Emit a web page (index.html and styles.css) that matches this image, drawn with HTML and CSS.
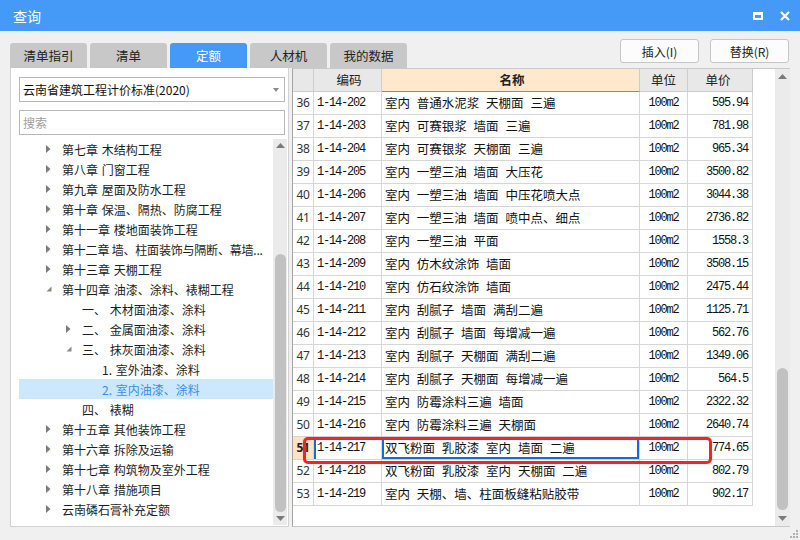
FILE: index.html
```html
<!DOCTYPE html>
<html lang="zh-CN">
<head>
<meta charset="utf-8">
<title>查询</title>
<link rel="stylesheet" href="styles.css">
</head>
<body>
<div class="window">
  <div class="titlebar">
    <span class="title">查询</span>
    <div class="win-ctrls">
      <span class="ic-max"></span>
      <svg class="ic-close" width="10" height="10" viewBox="0 0 10 10"><path d="M1 1L9 9M9 1L1 9" stroke="#fff" stroke-width="2.2" fill="none"/></svg>
    </div>
  </div>

  <div class="toolbar">
    <div class="tabs">
      <div class="tab">清单指引</div>
      <div class="tab">清单</div>
      <div class="tab active">定额</div>
      <div class="tab">人材机</div>
      <div class="tab">我的数据</div>
    </div>
    <div class="actions">
      <button class="btn">插入(I)</button>
      <button class="btn">替换(R)</button>
    </div>
  </div>

  <div class="main">
    <div class="left">
      <div class="select">云南省建筑工程计价标准(2020)<span class="caret"></span></div>
      <div class="search">搜索</div>
      <div class="tree-wrap">
        <div class="tree">
          <div class="node l1"><span class="arr"><svg width="5" height="8" viewBox="0 0 5 8"><path d="M0 0L4.5 4L0 8Z" fill="#7c7c7c"/></svg></span><span class="txt">第七章 木结构工程</span></div>
          <div class="node l1"><span class="arr"><svg width="5" height="8" viewBox="0 0 5 8"><path d="M0 0L4.5 4L0 8Z" fill="#7c7c7c"/></svg></span><span class="txt">第八章 门窗工程</span></div>
          <div class="node l1"><span class="arr"><svg width="5" height="8" viewBox="0 0 5 8"><path d="M0 0L4.5 4L0 8Z" fill="#7c7c7c"/></svg></span><span class="txt">第九章 屋面及防水工程</span></div>
          <div class="node l1"><span class="arr"><svg width="5" height="8" viewBox="0 0 5 8"><path d="M0 0L4.5 4L0 8Z" fill="#7c7c7c"/></svg></span><span class="txt">第十章 保温、隔热、防腐工程</span></div>
          <div class="node l1"><span class="arr"><svg width="5" height="8" viewBox="0 0 5 8"><path d="M0 0L4.5 4L0 8Z" fill="#7c7c7c"/></svg></span><span class="txt">第十一章 楼地面装饰工程</span></div>
          <div class="node l1"><span class="arr"><svg width="5" height="8" viewBox="0 0 5 8"><path d="M0 0L4.5 4L0 8Z" fill="#7c7c7c"/></svg></span><span class="txt tight">第十二章 墙、柱面装饰与隔断、幕墙...</span></div>
          <div class="node l1"><span class="arr"><svg width="5" height="8" viewBox="0 0 5 8"><path d="M0 0L4.5 4L0 8Z" fill="#7c7c7c"/></svg></span><span class="txt">第十三章 天棚工程</span></div>
          <div class="node l1"><span class="arr"><svg width="6" height="6" viewBox="0 0 6 6"><path d="M5.5 0.5L5.5 5.5L0.5 5.5Z" fill="#8a8a8a"/></svg></span><span class="txt">第十四章 油漆、涂料、裱糊工程</span></div>
          <div class="node l2"><span class="arr"></span><span class="txt">一、 木材面油漆、涂料</span></div>
          <div class="node l2"><span class="arr"><svg width="5" height="8" viewBox="0 0 5 8"><path d="M0 0L4.5 4L0 8Z" fill="#7c7c7c"/></svg></span><span class="txt">二、 金属面油漆、涂料</span></div>
          <div class="node l2"><span class="arr"><svg width="6" height="6" viewBox="0 0 6 6"><path d="M5.5 0.5L5.5 5.5L0.5 5.5Z" fill="#8a8a8a"/></svg></span><span class="txt">三、 抹灰面油漆、涂料</span></div>
          <div class="node l3"><span class="arr"></span><span class="txt">1. 室外油漆、涂料</span></div>
          <div class="node l3 selected"><span class="arr"></span><span class="txt">2. 室内油漆、涂料</span></div>
          <div class="node l2"><span class="arr"></span><span class="txt">四、 裱糊</span></div>
          <div class="node l1"><span class="arr"><svg width="5" height="8" viewBox="0 0 5 8"><path d="M0 0L4.5 4L0 8Z" fill="#7c7c7c"/></svg></span><span class="txt">第十五章 其他装饰工程</span></div>
          <div class="node l1"><span class="arr"><svg width="5" height="8" viewBox="0 0 5 8"><path d="M0 0L4.5 4L0 8Z" fill="#7c7c7c"/></svg></span><span class="txt">第十六章 拆除及运输</span></div>
          <div class="node l1"><span class="arr"><svg width="5" height="8" viewBox="0 0 5 8"><path d="M0 0L4.5 4L0 8Z" fill="#7c7c7c"/></svg></span><span class="txt">第十七章 构筑物及室外工程</span></div>
          <div class="node l1"><span class="arr"><svg width="5" height="8" viewBox="0 0 5 8"><path d="M0 0L4.5 4L0 8Z" fill="#7c7c7c"/></svg></span><span class="txt">第十八章 措施项目</span></div>
          <div class="node l1"><span class="arr"><svg width="5" height="8" viewBox="0 0 5 8"><path d="M0 0L4.5 4L0 8Z" fill="#7c7c7c"/></svg></span><span class="txt">云南磷石膏补充定额</span></div>
        </div>
        <div class="vscroll narrow">
          <div class="sb-btn"><svg width="9" height="5" viewBox="0 0 9 5"><path d="M0 5L4.5 0L9 5Z" fill="#7a7a7a"/></svg></div>
          <div class="sb-track"><div class="thumb" style="margin-top:102px;height:258px"></div></div>
          <div class="sb-btn"><svg width="9" height="5" viewBox="0 0 9 5"><path d="M0 0L4.5 5L9 0Z" fill="#7a7a7a"/></svg></div>
        </div>
      </div>
    </div>

    <div class="right">
      <div class="grid-area">
        <div class="row head">
          <div class="c num"></div>
          <div class="c code">编码</div>
          <div class="c name sel-col">名称</div>
          <div class="c unit">单位</div>
          <div class="c price">单价</div>
        </div>
        <div class="row"><div class="c num">36</div><div class="c code">1-14-202</div><div class="c name">室内 普通水泥浆 天棚面 三遍</div><div class="c unit">100m2</div><div class="c price">595.94</div></div>
        <div class="row"><div class="c num">37</div><div class="c code">1-14-203</div><div class="c name">室内 可赛银浆 墙面 三遍</div><div class="c unit">100m2</div><div class="c price">781.98</div></div>
        <div class="row"><div class="c num">38</div><div class="c code">1-14-204</div><div class="c name">室内 可赛银浆 天棚面 三遍</div><div class="c unit">100m2</div><div class="c price">965.34</div></div>
        <div class="row"><div class="c num">39</div><div class="c code">1-14-205</div><div class="c name">室内 一塑三油 墙面 大压花</div><div class="c unit">100m2</div><div class="c price">3500.82</div></div>
        <div class="row"><div class="c num">40</div><div class="c code">1-14-206</div><div class="c name">室内 一塑三油 墙面 中压花喷大点</div><div class="c unit">100m2</div><div class="c price">3044.38</div></div>
        <div class="row"><div class="c num">41</div><div class="c code">1-14-207</div><div class="c name">室内 一塑三油 墙面 喷中点、细点</div><div class="c unit">100m2</div><div class="c price">2736.82</div></div>
        <div class="row"><div class="c num">42</div><div class="c code">1-14-208</div><div class="c name">室内 一塑三油 平面</div><div class="c unit">100m2</div><div class="c price">1558.3</div></div>
        <div class="row"><div class="c num">43</div><div class="c code">1-14-209</div><div class="c name">室内 仿木纹涂饰 墙面</div><div class="c unit">100m2</div><div class="c price">3508.15</div></div>
        <div class="row"><div class="c num">44</div><div class="c code">1-14-210</div><div class="c name">室内 仿石纹涂饰 墙面</div><div class="c unit">100m2</div><div class="c price">2475.44</div></div>
        <div class="row"><div class="c num">45</div><div class="c code">1-14-211</div><div class="c name">室内 刮腻子 墙面 满刮二遍</div><div class="c unit">100m2</div><div class="c price">1125.71</div></div>
        <div class="row"><div class="c num">46</div><div class="c code">1-14-212</div><div class="c name">室内 刮腻子 墙面 每增减一遍</div><div class="c unit">100m2</div><div class="c price">562.76</div></div>
        <div class="row"><div class="c num">47</div><div class="c code">1-14-213</div><div class="c name">室内 刮腻子 天棚面 满刮二遍</div><div class="c unit">100m2</div><div class="c price">1349.06</div></div>
        <div class="row"><div class="c num">48</div><div class="c code">1-14-214</div><div class="c name">室内 刮腻子 天棚面 每增减一遍</div><div class="c unit">100m2</div><div class="c price">564.5</div></div>
        <div class="row"><div class="c num">49</div><div class="c code">1-14-215</div><div class="c name">室内 防霉涂料三遍 墙面</div><div class="c unit">100m2</div><div class="c price">2322.32</div></div>
        <div class="row"><div class="c num">50</div><div class="c code">1-14-216</div><div class="c name">室内 防霉涂料三遍 天棚面</div><div class="c unit">100m2</div><div class="c price">2640.74</div></div>
        <div class="row current"><div class="c num">51</div><div class="c code">1-14-217</div><div class="c name">双飞粉面 乳胶漆 室内 墙面 二遍</div><div class="c unit">100m2</div><div class="c price">774.65</div></div>
        <div class="row"><div class="c num">52</div><div class="c code">1-14-218</div><div class="c name">双飞粉面 乳胶漆 室内 天棚面 二遍</div><div class="c unit">100m2</div><div class="c price">802.79</div></div>
        <div class="row"><div class="c num">53</div><div class="c code">1-14-219</div><div class="c name">室内 天棚、墙、柱面板缝粘贴胶带</div><div class="c unit">100m2</div><div class="c price">902.17</div></div>
        <div class="mark"></div>
      </div>
      <div class="vscroll">
        <div class="sb-btn"><svg width="9" height="5" viewBox="0 0 9 5"><path d="M0 5L4.5 0L9 5Z" fill="#7a7a7a"/></svg></div>
        <div class="sb-track"><div class="thumb" style="margin-top:284px;height:142px"></div></div>
        <div class="sb-btn"><svg width="9" height="5" viewBox="0 0 9 5"><path d="M0 0L4.5 5L9 0Z" fill="#7a7a7a"/></svg></div>
      </div>
    </div>
  </div>

  <svg class="grip" width="9" height="9" viewBox="0 0 9 9">
    <rect x="7" y="1" width="2" height="2" fill="#b0b0b0"/>
    <rect x="4" y="4" width="2" height="2" fill="#b0b0b0"/>
    <rect x="7" y="4" width="2" height="2" fill="#b0b0b0"/>
    <rect x="1" y="7" width="2" height="2" fill="#b0b0b0"/>
    <rect x="4" y="7" width="2" height="2" fill="#b0b0b0"/>
    <rect x="7" y="7" width="2" height="2" fill="#b0b0b0"/>
  </svg>
</div>
</body>
</html>
```

FILE: styles.css
```css
* { box-sizing: border-box; }
html, body { margin: 0; padding: 0; }
body {
  font-family: "Noto Sans CJK SC", "Noto Sans", sans-serif;
  font-size: 12px;
  color: #222;
  background: #f0f0f0;
}
.window {
  position: relative;
  width: 800px;
  height: 540px;
  background: #f0f0f0;
  overflow: hidden;
}

/* title bar */
.titlebar {
  height: 31px;
  background: #4599f7;
  display: flex;
  align-items: center;
  padding: 0 10px 0 13px;
}
.title { color: #fff; font-size: 14px; flex: 1; }
.win-ctrls { display: flex; align-items: center; gap: 17px; }
.ic-max {
  display: block;
  width: 10px;
  height: 8px;
  border: 2px solid #fff;
  border-top-width: 3px;
}
.ic-close { display: block; }

/* toolbar */
.toolbar {
  height: 37px;
  display: flex;
  justify-content: space-between;
  padding: 0 11px 0 10px;
}
.tabs { display: flex; gap: 3px; align-self: flex-end; }
.tab {
  width: 77px;
  height: 25px;
  line-height: 25px;
  text-align: center;
  background: #c8c8c8;
  border-radius: 3px 3px 0 0;
  color: #222;
  font-size: 12.5px;
}
.tab.active { background: #4599f7; color: #fff; }
.actions { display: flex; gap: 11px; padding-top: 8px; }
.btn {
  width: 79px;
  height: 24px;
  background: #fcfcfc;
  border: 1px solid #c6c6c6;
  border-radius: 3px;
  font-family: inherit;
  font-size: 12px;
  color: #222;
  padding: 0;
}

/* main */
.main {
  display: flex;
  gap: 3px;
  height: 459px;
  padding: 0 10px;
}
.left {
  width: 279px;
  background: #fff;
  border: 1px solid #d2d2d2;
  border-top: none;
  padding: 9px 1px 1px 8px;
  display: flex;
  flex-direction: column;
}
.select {
  position: relative;
  width: 266px;
  height: 25px;
  border: 1px solid #b8b8b8;
  line-height: 23px;
  padding-left: 3px;
  font-size: 12px;
  color: #111;
}
.caret {
  position: absolute;
  right: 5px;
  top: 10px;
  width: 0;
  height: 0;
  border-left: 3.5px solid transparent;
  border-right: 3.5px solid transparent;
  border-top: 4px solid #8a8a8a;
}
.search {
  width: 266px;
  height: 25px;
  margin-top: 8px;
  border: 1px solid #b8b8b8;
  line-height: 23px;
  padding-left: 3px;
  color: #a0a0a0;
}
.tree-wrap {
  flex: 1;
  margin-top: 4px;
  display: flex;
  min-height: 0;
}
.tree { flex: 1; overflow: hidden; min-width: 0; }
.node {
  height: 20px;
  display: flex;
  align-items: center;
  white-space: nowrap;
  color: #1e1e1e;
}
.node.l1 { padding-left: 27px; }
.node.l2 { padding-left: 47px; }
.node.l3 { padding-left: 67px; }
.arr {
  flex: 0 0 16px;
  display: flex;
  align-items: center;
}
.arr svg { display: block; }
.txt {
  word-spacing: 1px;
  padding-right: 4px;
}
.txt.tight { padding-right: 0; word-spacing: 0; letter-spacing: -0.2px; }
.node.selected { background: #cce8ff; color: #3a8ee8; }

/* scrollbars */
.vscroll {
  width: 15px;
  background: #ebebeb;
  display: flex;
  flex-direction: column;
}
.vscroll.narrow { width: 14px; }
.sb-btn {
  height: 15px;
  display: flex;
  align-items: center;
  justify-content: center;
}
.narrow .sb-btn { height: 14px; }
.sb-track { flex: 1; padding: 0 2px; }
.narrow .sb-track { padding: 0 1.5px; }
.thumb {
  background: #c1c1c1;
  border-radius: 6px;
}

/* right grid */
.right {
  flex: 1;
  display: flex;
  background: #fff;
  border-top: 1px solid #c9c9c9;
  border-left: 1px solid #a4a4a4;
  border-bottom: 1px solid #c9c9c9;
}
.grid-area { position: relative; flex: 1; }
.row {
  display: grid;
  grid-template-columns: 21px 68px 258px 48px 65px;
  height: 23px;
}
.c {
  border-right: 1px solid #d6d6d6;
  border-bottom: 1px solid #d6d6d6;
  line-height: 22px;
  white-space: nowrap;
  overflow: hidden;
}
.row.head .c {
  background: #e8e8e8;
  border-color: #cdcdcd;
  text-align: center;
  font-family: "Noto Sans CJK SC", sans-serif;
  font-size: 12.5px;
  letter-spacing: 0;
  color: #222;
}
.row.head .c.sel-col {
  background: #ffe8cc;
  border-bottom: 1px solid #4599f7;
  font-weight: bold;
}
.c.num {
  text-align: center;
  color: #333;
  font-family: "Noto Sans", sans-serif;
  font-size: 12px;
  letter-spacing: -0.3px;
}
.c.code, .c.unit, .c.price {
  font-family: "Liberation Mono", monospace;
  font-size: 12px;
  letter-spacing: -1.2px;
  color: #111;
}
.c.code { padding-left: 3px; }
.c.name { padding-left: 3px; word-spacing: 4px; font-size: 12.5px; color: #111; }
.c.unit { text-align: center; }
.c.price { text-align: right; padding-right: 4px; }
.row.current .c.num { background: #ffe3c2; font-weight: bold; color: #222; }
.row.current .c.code { box-shadow: inset 2px 0 0 #1668e3; }
.row.current .c.name { box-shadow: inset 0 0 0 2px #1668e3; }

.mark {
  position: absolute;
  left: 10px;
  top: 368px;
  width: 409px;
  height: 27px;
  border: 3px solid #f52424;
  border-radius: 5px;
  box-shadow: 0 0 1px rgba(255, 40, 40, 0.5);
}

.grip { position: absolute; right: 2px; bottom: 2px; }
```
